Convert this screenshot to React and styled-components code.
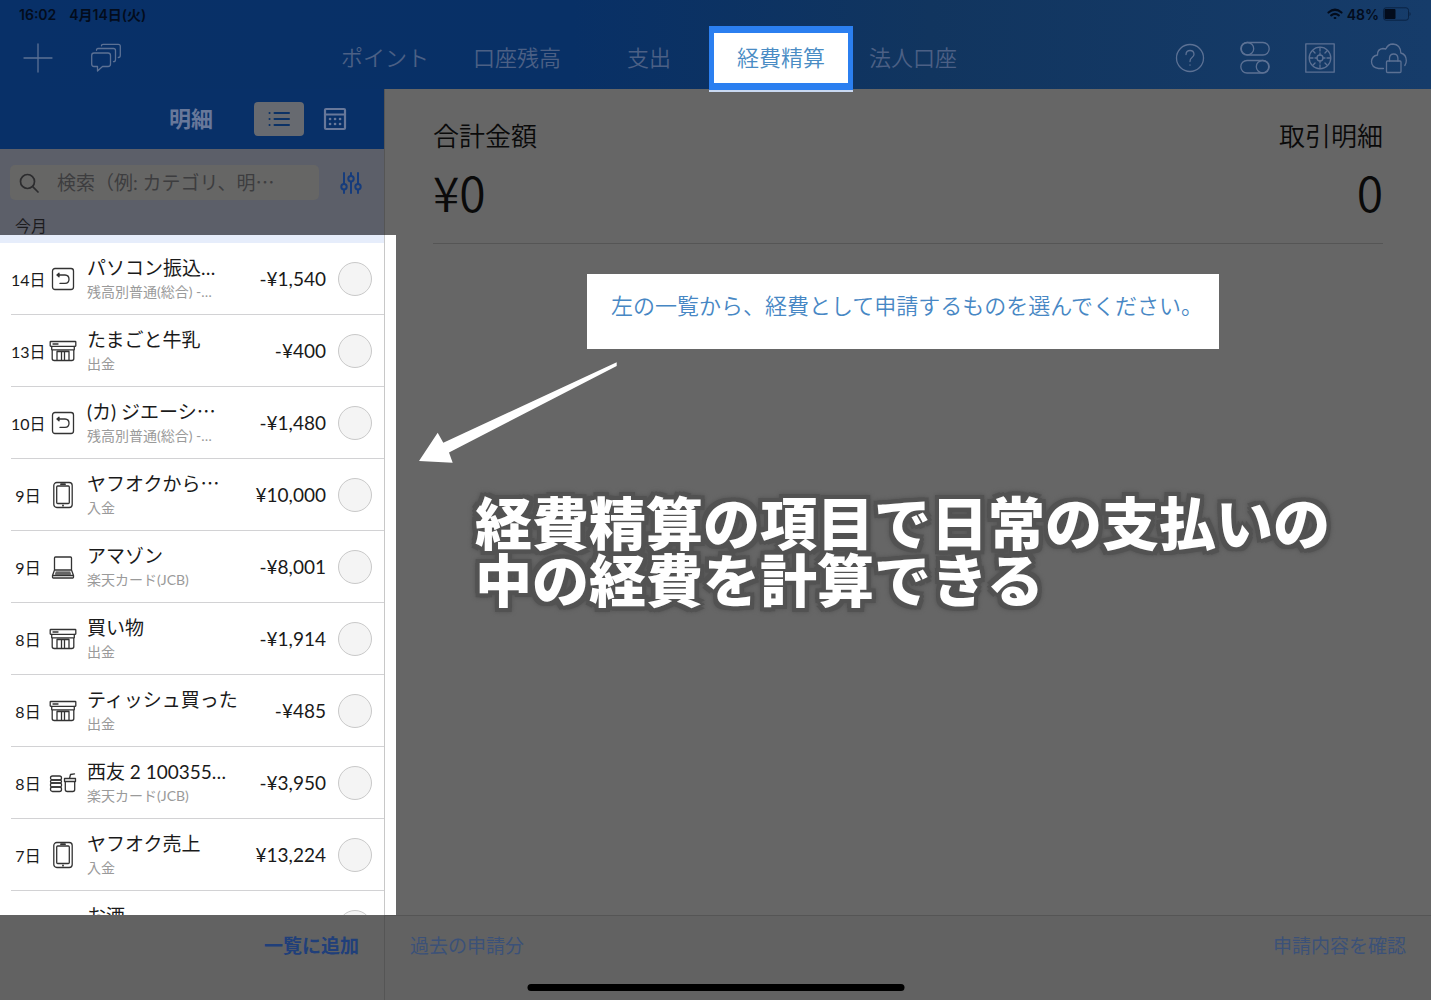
import React from "react";
import styled, { createGlobalStyle, css } from "styled-components";

const GlobalStyle = createGlobalStyle`
  * {
    box-sizing: border-box;
  }

  body {
    margin: 0;
    font-family: Lato, "Noto Sans CJK JP", sans-serif;
    color: #1a1a1a;
    background: #666;
  }

  button,
  input {
    font-family: inherit;
    border: none;
    padding: 0;
    background: none;
  }
`;

const Page = styled.div`
  position: relative;
  height: 100vh;
  display: flex;
  flex-direction: column;
  overflow: hidden;
`;

/* ---- header ---- */

const Header = styled.header`
  flex: none;
  height: 89px;
  background: linear-gradient(90deg, #083068 0%, #083066 40%, #11355f 65%, #163c6a 100%);
`;

const StatusBar = styled.div`
  height: 28px;
  padding: 0 20px 0 19px;
  display: flex;
  align-items: center;
  gap: 13px;
  font-family: Inter, "Noto Sans CJK JP", sans-serif;
  font-size: 14px;
  font-weight: 600;
  color: #030c1c;
`;

const StatusRight = styled.div`
  margin-left: auto;
  display: flex;
  align-items: center;
  gap: 4px;
`;

const Nav = styled.nav`
  height: 60px;
  display: flex;
  align-items: center;
`;

const NavLeft = styled.div`
  flex: 0 0 319px;
  padding-left: 23px;
  display: flex;
  gap: 38px;
`;

const Tabs = styled.div`
  flex: 0 1 660px;
  display: flex;
  align-items: center;
`;

const Tab = styled.button`
  flex: 1 1 0;
  height: 60px;
  padding-bottom: 4px;
  font-size: 22px;
  font-weight: 350;
  color: #4c6085;
  white-space: nowrap;

  ${(props) =>
    props.$active &&
    css`
      position: relative;
      z-index: 2;
      flex-basis: 12px;
      height: 64px;
      margin: 0 -6px;
      color: #4a8cc4;
      background: #fff;
      border: solid #2b7ff0;
      border-width: 7px 5px;
      box-shadow: 0 2px 0 #c9d9f2;
    `}
`;

const NavRight = styled.div`
  flex: 1;
  padding-right: 23px;
  display: flex;
  justify-content: flex-end;
  align-items: center;
  gap: 35px;
`;

const IconButton = styled.button`
  display: flex;
  color: ${(props) => props.$color || "#5c7194"};
`;

/* ---- body ---- */

const Body = styled.div`
  flex: 1;
  min-height: 0;
  display: flex;
`;

const Sidebar = styled.aside`
  flex: 0 0 385px;
  display: flex;
  flex-direction: column;
  background: #5c5f69;
  border-right: 1px solid #555;
`;

const SidebarHead = styled.div`
  flex: none;
  height: 60px;
  padding-right: 37px;
  display: flex;
  align-items: center;
  justify-content: flex-end;
  background: #083068;
`;

const SidebarTitle = styled.h1`
  margin: 0 41px 0 0;
  padding-bottom: 4px;
  font-size: 22px;
  font-weight: 700;
  color: #68789a;
`;

const ListButton = styled.button`
  width: 50px;
  height: 34px;
  margin-right: 19px;
  display: flex;
  align-items: center;
  justify-content: center;
  border-radius: 4px;
  background: #676a70;
  color: #0c3266;
`;

const SearchRow = styled.div`
  flex: none;
  height: 67px;
  padding: 0 22px 0 10px;
  display: flex;
  align-items: center;
  justify-content: space-between;
`;

const SearchBox = styled.label`
  width: 309px;
  height: 35px;
  padding-left: 9px;
  display: flex;
  align-items: center;
  gap: 18px;
  border-radius: 5px;
  background: #666665;
  color: #2c2c2e;
`;

const SearchInput = styled.input`
  flex: 1;
  min-width: 0;
  font-size: 19px;
  outline: none;

  &::placeholder {
    color: #3d3d3f;
    opacity: 1;
  }
`;

const Month = styled.h2`
  flex: none;
  height: 19px;
  margin: 0;
  padding-left: 15px;
  font-size: 16px;
  line-height: 20px;
  font-weight: 400;
  color: #1c1c1e;
`;

/* the lit part of the sidebar, a little wider than the column */
const ListPanel = styled.div`
  position: relative;
  flex: 1;
  min-height: 0;
  background: #fff;
  border-top: 8px solid #e6edfb;

  &::after {
    content: "";
    position: absolute;
    top: -8px;
    bottom: 0;
    left: 100%;
    width: 11px;
    background: #fff;
    border-left: 1px solid #c8c8c8;
  }
`;

const List = styled.ul`
  height: 100%;
  margin: 0;
  padding: 0 0 0 11px;
  list-style: none;
  overflow: hidden;
`;

const Row = styled.li`
  height: 72px;
  padding-right: 12px;
  display: grid;
  grid-template-columns: 34px 36px minmax(0, 1fr) auto 34px;
  align-items: center;
  border-bottom: 1px solid #d2d2d4;
`;

const Day = styled.span`
  font-size: 16px;
  text-align: center;
  white-space: nowrap;
`;

const RowIcon = styled.span`
  display: flex;
  justify-content: center;
  color: #333;
`;

const Texts = styled.label`
  padding-left: 6px;
  white-space: nowrap;
`;

const Name = styled.div`
  font-size: 19px;
  line-height: 26px;
`;

const Account = styled.div`
  font-size: 14px;
  line-height: 22px;
  color: #9a9a9a;
`;

const Amount = styled.span`
  margin-right: 12px;
  font-size: 19px;
`;

const Check = styled.input`
  appearance: none;
  width: 34px;
  height: 34px;
  margin: 0;
  border: 1px solid #c9c9c9;
  border-radius: 50%;
  background: #f4f4f4;

  &:checked {
    background: #2b7ff0;
  }
`;

const Main = styled.main`
  flex: 1;
  min-width: 0;
  padding: 0 48px;
  display: flex;
  flex-direction: column;
  align-items: flex-start;
  background: #666;
`;

const Summary = styled.dl`
  align-self: stretch;
  height: 155px;
  margin: 0;
  padding-top: 27px;
  display: flex;
  justify-content: space-between;
  border-bottom: 1px solid #555;
  font-family: "Noto Sans CJK JP", sans-serif;
  font-weight: 350;
  color: #0a0a0a;
`;

const Total = styled.div`
  text-align: ${(props) => props.$align || "left"};

  dt {
    font-size: 26px;
    line-height: 38px;
  }

  dd {
    margin: 9px 0 0;
    font-size: 48px;
    line-height: 56px;
  }
`;

const Hint = styled.p`
  width: 632px;
  max-width: 100%;
  height: 75px;
  margin: 30px 0 0 154px;
  padding: 16px 0 0 8px;
  font-size: 22px;
  font-weight: 350;
  line-height: 32px;
  text-align: center;
  white-space: nowrap;
  background: #fff;
  color: #4787c4;
`;

const Arrow = styled.svg`
  position: relative;
  z-index: 1;
  margin: 13px 0 0 -14px;
`;

const Caption = styled.p`
  margin: 29px 0 0 42px;
  font-family: "Noto Sans CJK JP", sans-serif;
  font-size: 57px;
  line-height: 57px;
  font-weight: 900;
  white-space: nowrap;
  color: #fff;
  filter: drop-shadow(4px 0 0 #525252) drop-shadow(-4px 0 0 #525252)
    drop-shadow(0 4px 0 #525252) drop-shadow(0 -4px 0 #525252)
    drop-shadow(0 0 2px #525252);
`;

/* ---- footer ---- */

const Footer = styled.footer`
  flex: none;
  height: 85px;
  display: flex;
  background: #626262;
`;

const FooterSide = styled.div`
  flex: 0 0 385px;
  padding: 16px 25px 0 0;
  text-align: right;
  border-right: 1px solid #555;
`;

const FooterMain = styled.div`
  flex: 1;
  padding: 15px 25px 0;
  display: flex;
  align-items: flex-start;
  justify-content: space-between;
  border-top: 1px solid #555;
`;

const FooterButton = styled.button`
  font-size: 19px;
  line-height: 30px;
  font-weight: ${(props) => (props.$bold ? 700 : 400)};
  color: ${(props) => (props.$bold ? "#203f7a" : "#3b5178")};
`;

const HomeBar = styled.div`
  position: absolute;
  left: 50%;
  bottom: 9px;
  width: 377px;
  height: 7px;
  border-radius: 4px;
  background: #000;
  transform: translateX(-50%);
`;

/* ---- icons ---- */

const Svg = ({ w, h, sw = 1.3, children }) => (
  <svg
    width={w}
    height={h}
    viewBox={`0 0 ${w} ${h}`}
    fill="none"
    stroke="currentColor"
    strokeWidth={sw}
    strokeLinecap="round"
    strokeLinejoin="round"
    aria-hidden="true"
  >
    {children}
  </svg>
);

const PlusIcon = () => (
  <Svg w={30} h={30}>
    <path d="M15 1v28M1 15h28" />
  </Svg>
);

const ChatIcon = () => (
  <Svg w={30} h={30}>
    <path d="M3 10h14q2.500 0 2.500 2.500v8.500q0 2.500-2.500 2.500h-5.500L6.500 28v-4.500H3Q.7 23.500.7 21v-8.500Q.7 10 3 10z" />
    <path d="M5.500 7.300V7q0-1.500 1.500-1.500h15.500q2 0 2 2v9q0 2.200-2 2.200" />
    <path d="M10.500 2.800q0-1.500 1.500-1.500h15.300q2 0 2 2v9q0 2.200-2 2.200" />
  </Svg>
);

const HelpIcon = () => (
  <Svg w={30} h={30}>
    <circle cx="15" cy="15" r="13.500" />
    <path d="M11 11.500Q11.200 7.500 15 7.500t4 3.700q0 2-2.200 3.600-1.800 1.300-1.800 3.700M15 21.800v.4" />
  </Svg>
);

const SwitchesIcon = () => (
  <Svg w={30} h={34}>
    <rect x=".8" y="1.500" width="28.400" height="12.500" rx="6.250" />
    <circle cx="7.500" cy="7.700" r="6.200" />
    <rect x=".8" y="19.500" width="28.400" height="12.500" rx="6.250" />
    <circle cx="22.500" cy="25.700" r="6.200" />
  </Svg>
);

const SafeIcon = () => (
  <Svg w={30} h={30}>
    <rect x=".8" y=".8" width="28.400" height="28.400" />
    <circle cx="15" cy="15" r="10.800" />
    <circle cx="15" cy="15" r="3" />
    {[0, 45, 90, 135, 180, 225, 270, 315].map((a) => (
      <path key={a} d="M15 4.500v3.500" transform={`rotate(${a} 15 15)`} />
    ))}
    {[0, 90, 180, 270].map((a) => (
      <path key={a} d="M15 10v2" transform={`rotate(${a} 15 15)`} />
    ))}
  </Svg>
);

const CloudLockIcon = () => (
  <Svg w={38} h={32}>
    <path d="M13.500 26.500H8.500Q1.500 25.500 1.500 19.500 1.800 14 7.500 13q-.3-6 5.500-6.500 1.500 0 2.800.6Q18 2 23 2q7.500.5 7.800 9 5.500 1.500 5.500 7.500 0 3-1.500 5" />
    <rect x="16.500" y="19" width="14.500" height="11.500" rx="1" />
    <path d="M19.500 19v-3q.3-4 4.200-4t4.200 4v3" />
  </Svg>
);

const WifiIcon = () => (
  <Svg w={16} h={12} sw={2.2}>
    <path d="M1.500 4.500q6.500-5.500 13 0M4.200 7.300q3.800-3 7.600 0M7.700 10h.6" />
  </Svg>
);

const BatteryIcon = () => (
  <svg width="28" height="14" viewBox="0 0 28 14" aria-hidden="true">
    <rect x=".5" y=".8" width="25" height="12.400" rx="2.500" fill="none" stroke="#0a2344" />
    <rect x="1.500" y="2" width="11" height="10" rx="1" fill="#030c1c" />
    <path d="M26.500 5v4l1-1V6z" fill="#0a2344" />
  </svg>
);

const ListIcon = () => (
  <Svg w={22} h={18} sw={2}>
    <path d="M6.500 3H21M6.500 9H21M6.500 15H21M1.500 3h.1M1.500 9h.1M1.500 15h.1" />
  </Svg>
);

const CalcIcon = () => (
  <Svg w={24} h={24} sw={2.2}>
    <rect x="2" y="2" width="20" height="20" rx="1" />
    <path d="M2 7.500h20" />
    <path d="M7 12h.1M12 12h.1M17 12h.1M7 17h.1M12 17h.1M17 17h.1" strokeWidth="2.600" />
  </Svg>
);

const SearchIcon = () => (
  <Svg w={20} h={20} sw={1.7}>
    <circle cx="8.500" cy="8.500" r="7" />
    <path d="M13.700 13.700L19 19" />
  </Svg>
);

const FilterIcon = () => (
  <Svg w={22} h={22} sw={2}>
    <path d="M4 1v10.500M4 18v3M11 1v2.500M11 10v11M18 1v10.500M18 18v3" />
    <circle cx="4" cy="14.700" r="2.700" />
    <circle cx="11" cy="6.800" r="2.700" />
    <circle cx="18" cy="14.700" r="2.700" />
  </Svg>
);

const rowIcons = {
  transfer: (
    <Svg w={24} h={24}>
      <rect x="1.500" y="1.500" width="21" height="21" rx="2.500" />
      <path d="M8 6.200L6 8l2 1.800z" fill="currentColor" />
      <path d="M6.500 8H14q4 .2 4 4.200t-4 4.200H9" />
    </Svg>
  ),
  shop: (
    <Svg w={28} h={22}>
      <rect x="1.200" y="1.500" width="25.600" height="4.800" rx=".5" />
      <path d="M4 4h5M2.700 6.300v3.500h22.600V6.300M3.200 9.800V18.500q0 2 2 2h17.600q2 0 2-2V9.800M8 20.500V11.500h12v9M12.500 20.500v-9M15.500 20.500v-9" />
    </Svg>
  ),
  phone: (
    <Svg w={22} h={28}>
      <rect x="1.800" y="1.500" width="18.400" height="25" rx="3" />
      <rect x="4.700" y="5" width="12.600" height="17.500" rx="1" />
      <path d="M9 3.200h4M11 24.500v.2" strokeWidth="1.800" />
    </Svg>
  ),
  laptop: (
    <Svg w={24} h={24}>
      <path d="M3.500 15V3q0-1 1-1h15q1 0 1 1v12zM3.500 15L1.500 20.500v1.700q0 .8.800.8h19.400q.8 0 .8-.8v-1.700L20.500 15M1.500 20.500h21M5 17.200h14M4.500 18.800h15" />
    </Svg>
  ),
  food: (
    <Svg w={28} h={20}>
      <rect x="1.500" y="3" width="11" height="4" rx="2" />
      <rect x="1.500" y="7" width="11" height="3" rx="1.500" />
      <rect x="1.500" y="10" width="11" height="4" rx="1.500" />
      <rect x="1.500" y="14" width="11" height="4.500" rx="2" />
      <path d="M15.500 5.500h11v3h-11zM16.300 8.500v8q0 2 2 2h5.400q2 0 2-2v-8M20.500 5.500L21.500 1.500l4-.7" />
    </Svg>
  ),
};

const tabs = ["ポイント", "口座残高", "支出", "経費精算", "法人口座"];

const items = [
  { day: "14日", icon: "transfer", name: "パソコン振込…", account: "残高別普通(総合) -…", amount: "-¥1,540" },
  { day: "13日", icon: "shop", name: "たまごと牛乳", account: "出金", amount: "-¥400" },
  { day: "10日", icon: "transfer", name: "(カ) ジエーシ⋯", account: "残高別普通(総合) -…", amount: "-¥1,480" },
  { day: "9日", icon: "phone", name: "ヤフオクから⋯", account: "入金", amount: "¥10,000" },
  { day: "9日", icon: "laptop", name: "アマゾン", account: "楽天カード(JCB)", amount: "-¥8,001" },
  { day: "8日", icon: "shop", name: "買い物", account: "出金", amount: "-¥1,914" },
  { day: "8日", icon: "shop", name: "ティッシュ買った", account: "出金", amount: "-¥485" },
  { day: "8日", icon: "food", name: "西友 2 100355…", account: "楽天カード(JCB)", amount: "-¥3,950" },
  { day: "7日", icon: "phone", name: "ヤフオク売上", account: "入金", amount: "¥13,224" },
  { name: "お酒" },
];

const App = () => {
  return (
    <Page lang="ja">
      <GlobalStyle />
      <Header>
        <StatusBar>
          <span>16:02</span>
          <span>4月14日(火)</span>
          <StatusRight>
            <WifiIcon />
            <span>48%</span>
            <BatteryIcon />
          </StatusRight>
        </StatusBar>
        <Nav>
          <NavLeft>
            <IconButton aria-label="追加">
              <PlusIcon />
            </IconButton>
            <IconButton aria-label="お知らせ">
              <ChatIcon />
            </IconButton>
          </NavLeft>
          <Tabs>
            {tabs.map((tab) => (
              <Tab key={tab} $active={tab === "経費精算"}>
                {tab}
              </Tab>
            ))}
          </Tabs>
          <NavRight>
            <IconButton aria-label="ヘルプ">
              <HelpIcon />
            </IconButton>
            <IconButton aria-label="設定">
              <SwitchesIcon />
            </IconButton>
            <IconButton aria-label="金庫">
              <SafeIcon />
            </IconButton>
            <IconButton aria-label="クラウド">
              <CloudLockIcon />
            </IconButton>
          </NavRight>
        </Nav>
      </Header>

      <Body>
        <Sidebar>
          <SidebarHead>
            <SidebarTitle>明細</SidebarTitle>
            <ListButton aria-label="一覧">
              <ListIcon />
            </ListButton>
            <IconButton aria-label="カレンダー" $color="#68789a">
              <CalcIcon />
            </IconButton>
          </SidebarHead>
          <SearchRow>
            <SearchBox>
              <SearchIcon />
              <SearchInput
                type="text"
                aria-label="検索"
                placeholder="検索（例: カテゴリ、明⋯"
              />
            </SearchBox>
            <IconButton aria-label="絞り込み" $color="#163c7c">
              <FilterIcon />
            </IconButton>
          </SearchRow>
          <Month>今月</Month>
          <ListPanel>
            <List>
              {items.map((item, i) => (
                <Row key={i}>
                  <Day>{item.day}</Day>
                  <RowIcon>{rowIcons[item.icon]}</RowIcon>
                  <Texts htmlFor={`item-${i}`}>
                    <Name>{item.name}</Name>
                    <Account>{item.account || "\u00a0"}</Account>
                  </Texts>
                  <Amount>{item.amount}</Amount>
                  <Check type="checkbox" id={`item-${i}`} />
                </Row>
              ))}
            </List>
          </ListPanel>
        </Sidebar>

        <Main>
          <Summary>
            <Total>
              <dt>合計金額</dt>
              <dd>¥0</dd>
            </Total>
            <Total $align="right">
              <dt>取引明細</dt>
              <dd>0</dd>
            </Total>
          </Summary>
          <Hint>左の一覧から、経費として申請するものを選んでください。</Hint>
          <Arrow width="198" height="101" viewBox="0 0 198 101" aria-hidden="true">
            <path d="M197.700.3v3.800L30 90.500l3.700 10.200L0 99 18.700 70.800l5.600 10z" fill="#fff" />
          </Arrow>
          <Caption>
            経費精算の項目で日常の支払いの
            <br />
            中の経費を計算できる
          </Caption>
        </Main>
      </Body>

      <Footer>
        <FooterSide>
          <FooterButton $bold>一覧に追加</FooterButton>
        </FooterSide>
        <FooterMain>
          <FooterButton>過去の申請分</FooterButton>
          <FooterButton>申請内容を確認</FooterButton>
        </FooterMain>
      </Footer>
      <HomeBar />
    </Page>
  );
};

export default App;
